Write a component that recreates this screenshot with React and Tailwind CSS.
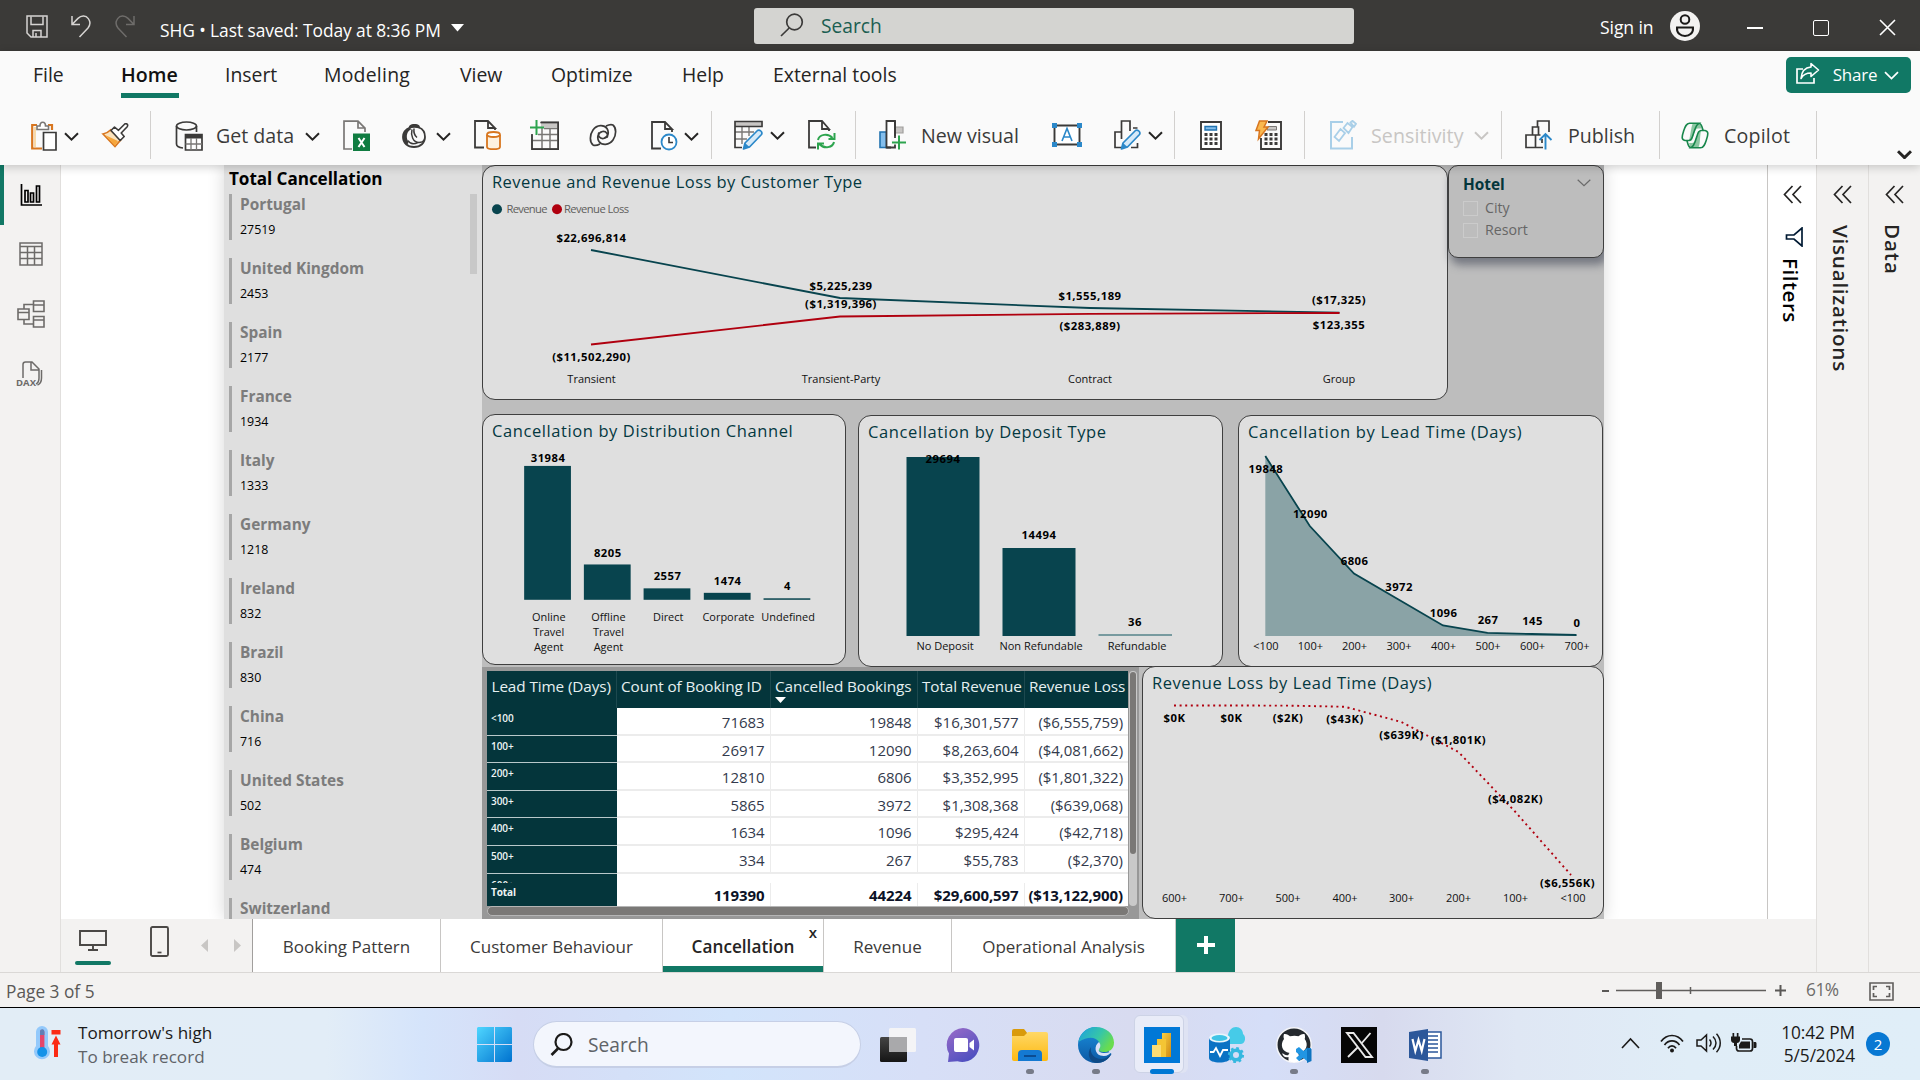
import React from "react";

const SANS = "font-['Open_Sans','Noto_Sans',sans-serif]";

/* ---------- shared bits ---------- */
function Svg({ w, h, className = "", children, ...rest }) {
  return (
    <svg width={w} height={h} viewBox={`0 0 ${w} ${h}`} fill="none" className={`block shrink-0 ${className}`} {...rest}>
      {children}
    </svg>
  );
}

function Chevron({ className = "", color = "#252423", width = 2 }) {
  return (
    <Svg w={15} h={9} className={className}>
      <path d="M1 1.2 7.5 7.6 14 1.2" stroke={color} strokeWidth={width} />
    </Svg>
  );
}

function Rule({ className }) {
  return <div className={`h-12 w-px shrink-0 bg-[#d2d0ce] ${className}`} />;
}

/* ---------- title bar ---------- */
function TitleBar() {
  return (
    <header className="flex h-[51px] shrink-0 items-center bg-[#3b3a38] text-white">
      <Svg w={22} h={23} className="ml-[26px] mt-0.5">
        <path d="M1 1h20v21H5l-4-4z" stroke="#d6d4d2" strokeWidth="1.5" />
        <path d="M5 1.5v8h12v-8M7 22v-6.5h8V22M10 18v4" stroke="#d6d4d2" strokeWidth="1.5" />
      </Svg>
      <Svg w={20} h={23} className="ml-[23px] mt-0.5">
        <path d="M1 1v8.5h8M1.5 9 7 3.4C10.500 0 15 .6 17.300 3.600 19.800 7 19 10.500 17 13L8.500 22" stroke="#d6d4d2" strokeWidth="1.5" />
      </Svg>
      <Svg w={20} h={23} className="ml-6 mt-0.5">
        <path d="M19 1v8.500h-8M18.500 9 13 3.400C9.500 0 5 .6 2.700 3.600.2 7 1 10.500 3 13l8.500 9" stroke="#6e6c6a" strokeWidth="1.5" />
      </Svg>
      <div className="ml-[25px] mt-[9px] w-[281px] whitespace-nowrap text-[17.4px]/[24px] tracking-[-0.08px]">SHG • Last saved: Today at 8:36 PM</div>
      <Svg w={13} h={8} className="ml-[10px] mt-1">
        <path d="M0 0h13L6.500 7.500z" fill="#fff" />
      </Svg>
      <div className="ml-[290px] flex h-9 w-[600px] items-center rounded-[3px] bg-[#d4d4d1]">
        <Svg w={24} h={24} className="ml-[26px] -mt-0.5">
          <circle cx="14.500" cy="9" r="7.800" stroke="#3b3a39" strokeWidth="1.7" />
          <path d="M9.200 15 1 23" stroke="#3b3a39" strokeWidth="1.7" />
        </Svg>
        <span className="ml-[17px] mt-[2px] text-[19.2px] text-[#1b5e51]">Search</span>
      </div>
      <span className="ml-[246px] mt-[3px] w-[55px] whitespace-nowrap text-[17.6px] tracking-[-0.1px]">Sign in</span>
      <div className="ml-[15px] flex h-[30px] w-[30px] items-center justify-center rounded-full bg-[#f3f2f1]">
        <Svg w={20} h={24}>
          <circle cx="10" cy="5.500" r="4.300" stroke="#1b1a19" strokeWidth="2" />
          <path d="M2 13.500h16c.5 5.500-3.500 8.500-8 8.500s-8.500-3-8-8.500z" stroke="#1b1a19" strokeWidth="2" />
        </Svg>
      </div>
      <div className="ml-[47px] mt-1 h-[2px] w-4 bg-white" />
      <div className="ml-[50px] mt-1 h-4 w-4 rounded-[2px] border-[1.5px] border-white" />
      <Svg w={17} h={17} className="ml-[50px] mt-1">
        <path d="M1 1l15 15M16 1 1 16" stroke="#fff" strokeWidth="1.6" />
      </Svg>
    </header>
  );
}

/* ---------- ribbon tabs ---------- */
function RibbonTabs() {
  return (
    <nav className="flex h-[54px] items-start pt-[9px] text-[19.4px]/[30px] text-[#252423]">
      <span className="ml-[33px] w-[88px]">File</span>
      <div className="w-[104px]">
        <div className="w-[58px] whitespace-nowrap border-b-[5px] border-[#117865] pb-[3px] text-[19.6px] font-semibold text-[#111]">Home</div>
      </div>
      <span className="w-[99px]">Insert</span>
      <span className="w-[136px] tracking-[0.25px]">Modeling</span>
      <span className="w-[91px]">View</span>
      <span className="w-[131px]">Optimize</span>
      <span className="w-[91px]">Help</span>
      <span className="w-[1013px] whitespace-nowrap">External tools</span>
      <button className="-mt-[3px] flex h-9 w-[125px] items-center rounded-[5px] bg-[#117865] text-white">
        <Svg w={24} h={22} className="ml-[10px] -mt-1">
          <path d="M7 7H1v14h17v-5" stroke="#fff" strokeWidth="1.7" />
          <path d="M15 1.500 22.500 8 15 14.500V11c-5 0-8 1.800-10 5.500C5.500 10 9 5.500 15 5z" stroke="#fff" strokeWidth="1.6" strokeLinejoin="round" />
        </Svg>
        <span className="ml-3 w-[46px] text-[17px] tracking-[-0.2px]">Share</span>
        <Chevron color="#fff" width={1.7} className="ml-[6px]" />
      </button>
    </nav>
  );
}

/* ---------- ribbon icons ---------- */
const K = "#3b3a39";

const PasteIcon = () => (
  <Svg w={26} h={30}>
    <path d="M6 4H1.200v23.500H11M17 4h4v5" stroke="#d8761f" strokeWidth="2.200" />
    <path d="M3 6h2v20H3z" fill="#f8d9a8" />
    <path d="M6 8.500V5h3c0-5 5.500-5 5.500 0h3v3.500z" fill="#fff" stroke="#797775" strokeWidth="1.600" />
    <path d="M12.500 11.500H25V29H12.500z" fill="#fff" stroke={K} strokeWidth="1.700" />
  </Svg>
);
const BrushIcon = () => (
  <Svg w={28} h={25}>
    <path d="m2 11 12 12.500 6-7L9.500 7C7 9.500 5 10.500 2 11z" fill="#fbe3bd" stroke="#d8761f" strokeWidth="1.700" />
    <path d="m4 12 13 6-3 5z" fill="#f6a63c" />
    <path d="M10 7.500 13.500 4l4 3.300 6-6.100c2-1.500 4 .5 2.700 2.500l-6 6.300 3 3.500-4 4z" fill="#fff" stroke={K} strokeWidth="1.600" strokeLinejoin="round" />
  </Svg>
);
const GetDataIcon = () => (
  <Svg w={28} h={30}>
    <ellipse cx="11.500" cy="5" rx="10" ry="4" stroke={K} strokeWidth="1.600" />
    <path d="M1.500 5v18c0 2 2 3.500 6.500 4M21.500 5v6" stroke={K} strokeWidth="1.700" />
    <path d="M10.500 13.500H27V29H10.500z" fill="#fff" stroke={K} strokeWidth="1.700" />
    <path d="M10.500 14H27v3.500H10.500z" fill={K} />
    <path d="M10.500 23H27M16 17v12M21.500 17v12" stroke="#797775" strokeWidth="1.300" />
  </Svg>
);
const ExcelIcon = () => (
  <Svg w={27} h={31}>
    <path d="M9 29H1V1.200h14l7 7V12M15 1.500V8h7" stroke="#797775" strokeWidth="1.700" />
    <path d="M10 13.500h17V31H10z" fill="#107c41" />
    <path d="m15.500 18 6 9M21.500 18l-6 9" stroke="#fff" strokeWidth="2" />
  </Svg>
);
const OneLakeIcon = () => (
  <Svg w={24} h={25}>
    <path d="M7 5.500C6 3 8.500 1 12.500 1S19 3 17.500 5.500c-3-1-7-1-10.500 0z" fill={K} />
    <path d="M8 4.500C3 6.500 1 10 1 14c0 6 4.500 10 11 10s11-4 11-10c0-4-2-8-6-9.500" stroke={K} strokeWidth="1.800" />
    <path d="M8 5C2 7 .5 10 1 15c.3 2.500 1.500 4.500 3.500 6.500C7 21 6.500 19 5.500 17 4 13 5 8 9.500 6z" fill={K} />
    <path d="M10 6.500c-1.500 6 1 13 7 13 2.500 0 4.500-1 5.500-3M12 5.500c-.5 4 .5 7 3 9M6 17.500c2 3.500 6 4 10 2" stroke={K} strokeWidth="1.500" />
  </Svg>
);
const SqlIcon = () => (
  <Svg w={27} h={30}>
    <path d="M10 27.500H1V1h13l7 7v2M14 1v7h7z" stroke={K} strokeWidth="1.800" />
    <path d="M13 15v12c0 3 13 3 13 0V15" fill="#fdf1df" stroke="#d8761f" strokeWidth="1.800" />
    <ellipse cx="19.500" cy="14.500" rx="6.500" ry="2.500" fill="#fff" stroke="#d8761f" strokeWidth="1.800" />
  </Svg>
);
const EnterDataIcon = () => (
  <Svg w={29} h={31}>
    <path d="M11 2.500h17v5H11z" fill="#c8c6c4" />
    <path d="M10 2.500h18V29H2V15M2 20.500h26M12 8v21M20 8v21M14 8.500h14M8 14.500h20" stroke="#797775" strokeWidth="1.500" />
    <path d="M11 2.300h17.200V29.200H2V14" stroke={K} strokeWidth="1.700" />
    <path d="M6.500 0v15M0 7.500h14" stroke="#2da44e" strokeWidth="2" />
  </Svg>
);
const DataverseIcon = () => (
  <Svg w={28} h={24}>
    <path d="M24 2C27.500 5 27.500 12 24 17c-4 5.500-11 5.500-14 1.500-2.500-4-1-9 3.500-10 4-.5 6 3 4.500 6M4 22C.5 19 .5 12 4 7 8 1.500 15 1.500 18 5.500c2.500 4 1 9-3.500 10-4 .5-6-3-4.500-6M4 22c2 1 5 0 7-1M24 2c-2-1-5 0-7 1" stroke={K} strokeWidth="1.700" />
  </Svg>
);
const RecentIcon = () => (
  <Svg w={27} h={30}>
    <path d="M10 27.500H1V1h13l7 7v3M14 1v7h7z" stroke={K} strokeWidth="1.800" />
    <circle cx="18" cy="21" r="7.500" fill="#fff" stroke="#2b88c9" strokeWidth="1.800" />
    <path d="M18 16v5.500h4" stroke={K} strokeWidth="1.600" />
  </Svg>
);
const Pencil = ({ x, y }) => (
  <g transform={`translate(${x} ${y})`}>
    <path d="m1 20 1.500-6L15 1.500c2-1.500 5.500 1.500 4 4L7 18z" fill="#d5e9f8" stroke="#2b88c9" strokeWidth="1.700" strokeLinejoin="round" />
    <path d="m1 20 1.500-6L7 18z" fill="#2b88c9" />
  </g>
);
const TransformIcon = () => (
  <Svg w={30} h={30}>
    <path d="M1 2h26v4H1z" fill="#c8c6c4" />
    <path d="M8 6v18M15 6v10M1 12h19M1 19h12" stroke="#797775" strokeWidth="1.400" />
    <path d="M8 27.500H1V1.500h27v5H1" stroke={K} strokeWidth="1.700" />
    <Pencil x={8.500} y={9} />
  </Svg>
);
const RefreshIcon = () => (
  <Svg w={28} h={30}>
    <path d="M8 27.500H1V1h13l7 8v2M14 1v8h7z" stroke={K} strokeWidth="1.800" />
    <path d="M10 20c1-5.500 10-7.500 14.500-2M26.500 13v6h-6M26 22c-1 5.500-10 7.500-14.500 2M10 29.500v-6h6" stroke="#2da44e" strokeWidth="2" />
  </Svg>
);
const NewVisualIcon = () => (
  <Svg w={28} h={30}>
    <path d="M16 7h8v6h-8z" fill="#c8c6c4" stroke="#a19f9d" strokeWidth="1.200" />
    <path d="M1 12h6.500v15.500H1z" fill="#83beec" stroke="#2273b0" strokeWidth="1.600" />
    <path d="M7.500 1H16v26.500H7.500z" fill="#fff" stroke={K} strokeWidth="1.800" />
    <path d="M12 16h16v14H12z" fill="#fafafa" />
    <path d="M7.500 27.500H16v-3M16 1v17" stroke={K} strokeWidth="1.800" />
    <path d="M20 15.500v14M13 22.500h14" stroke="#2da44e" strokeWidth="2" />
  </Svg>
);
const TextBoxIcon = () => (
  <Svg w={30} h={24}>
    <path d="M2.500 2.500h25v19h-25z" fill="#fff" stroke={K} strokeWidth="1.900" />
    <path d="M0 0h5v5H0zM25 0h5v5h-5zM0 19h5v5H0zM25 19h5v5h-5z" fill="#2b88c9" />
    <path d="m10 18 5-12.500L20 18M11.500 14h7" stroke="#2b88c9" strokeWidth="1.600" />
  </Svg>
);
const MoreVisualIcon = () => (
  <Svg w={28} h={30}>
    <path d="M8 27.500H1V12h6.500M7.500 19V1H16v10M19 8h4.500M23.500 23v4.500H17" stroke={K} strokeWidth="1.700" />
    <Pencil x={6.500} y={9} />
  </Svg>
);
const CalcBody = ({ x }) => (
  <g>
    <path d={`M${x + 4} 12h3v3h-3zM${x + 9} 12h3v3H${x + 9}zM${x + 14} 12h3v3h-3zM${x + 4} 16.500h3v3h-3zM${x + 9} 16.500h3v3H${x + 9}zM${x + 14} 16.500h3v3h-3zM${x + 4} 21h3v3h-3zM${x + 9} 21h3v3H${x + 9}zM${x + 14} 21h3v3h-3z`} fill={K} />
  </g>
);
const CalcIcon = () => (
  <Svg w={22} h={29}>
    <path d="M1 1h20v27H1z" fill="#fff" stroke={K} strokeWidth="1.900" />
    <path d="M5 5.500h11.500v3.500H5z" fill="#83beec" stroke="#2273b0" strokeWidth="1.400" />
    <CalcBody x={0.5} />
  </Svg>
);
const QuickMeasureIcon = () => (
  <Svg w={27} h={30}>
    <path d="M13 2h13v27H6V18" stroke={K} strokeWidth="1.900" />
    <path d="M13 6.500h8.500V10H12z" fill="#c8c6c4" stroke="#797775" />
    <g transform="translate(0 1)"><CalcBody x={5.500} /></g>
    <path d="M4.500 1H12L9 7h4L3.500 19l1-8.500H1z" fill="#f9b84f" stroke="#d8761f" strokeWidth="1.500" />
  </Svg>
);
const SensitivityIcon = () => (
  <Svg w={27} h={30}>
    <path d="M13 2H1v26.500h21V17" stroke="#a9cfe8" strokeWidth="2" />
    <path d="m4.500 17 6-8 4.500 4-6 8zM13.500 8l4-5 5 4-4 6zM20.500 2.500l2-1.700 3.500 3-2 3z" stroke="#a9cfe8" strokeWidth="1.800" />
  </Svg>
);
const PublishIcon = () => (
  <Svg w={28} h={30}>
    <path d="M1 15h9.500v12.500H1zM7.500 15V7h6v8M12.500 7V1H24v11M10.500 15h5M10.500 27.500H18M17 19v4" stroke={K} strokeWidth="1.700" />
    <path d="M20.500 29.500V15M14.500 20l6-6 6 6" stroke="#2b88c9" strokeWidth="1.900" />
  </Svg>
);
const CopilotIcon = () => (
  <Svg w={28} h={27}>
    <path d="M12 1h6c2 0 2 2 3 5.500h-4c-2 0-3 2-4 5l-2 7H8c2-7 2-14 4-17.500zM17 26h-6c-2 0-2-2-3-5h3c2 0 3-2 4-5l2-7h3c-1.500 7-.5 14-3 17z" fill="#8cc7a2" />
    <path d="M18 1.200H8.500C5 1.200 4 5 2.500 9.500S0 18 4 18.500h4c2 0 3-2 4-5.500l2-6c.6-2 1.500-4 4-5.800zM10 25.800h9.500c3.500 0 4.500-3.800 6-8.300S28 9 24 8.500h-4c-2 0-3 2-4 5.500l-2 6c-.6 2-1.500 4-4 5.800zM18 1.200c2.500 0 3 3 4 7M10 25.800c-2.500 0-3-3-4-7" stroke="#17864b" strokeWidth="1.600" />
  </Svg>
);

function Ribbon() {
  return (
    <div className="flex h-[60px] items-center text-[19.6px] text-[#3b3a39]">
      <div className="ml-[31px] mt-0.5"><PasteIcon /></div>
      <Chevron className="ml-[7px] mt-0.5" />
      <div className="ml-[22px]"><BrushIcon /></div>
      <Rule className="ml-[21px]" />
      <div className="ml-6 mt-0.5"><GetDataIcon /></div>
      <span className="ml-[13px] mt-[2px] w-[80px] whitespace-nowrap">Get data</span>
      <Chevron className="ml-[9px] mt-0.5" />
      <div className="ml-[23px]"><ExcelIcon /></div>
      <div className="ml-8"><OneLakeIcon /></div>
      <Chevron className="ml-[10px] mt-0.5" />
      <div className="ml-[23px]"><SqlIcon /></div>
      <div className="ml-[29px]"><EnterDataIcon /></div>
      <div className="ml-[30px]"><DataverseIcon /></div>
      <div className="ml-[34px] mt-0.5"><RecentIcon /></div>
      <Chevron className="ml-[6px] mt-0.5" />
      <Rule className="ml-3" />
      <div className="ml-[22px]"><TransformIcon /></div>
      <Chevron className="ml-[6px]" />
      <div className="ml-[23px]"><RefreshIcon /></div>
      <Rule className="ml-[19px]" />
      <div className="ml-[23px]"><NewVisualIcon /></div>
      <span className="ml-[14px] mt-[2px] w-[99px] whitespace-nowrap">New visual</span>
      <div className="ml-8"><TextBoxIcon /></div>
      <div className="ml-8"><MoreVisualIcon /></div>
      <Chevron className="ml-[6px]" />
      <Rule className="ml-[11px]" />
      <div className="ml-[25px]"><CalcIcon /></div>
      <div className="ml-[33px]"><QuickMeasureIcon /></div>
      <Rule className="ml-[22px]" />
      <div className="ml-[25px]"><SensitivityIcon /></div>
      <span className="ml-[14px] mt-[2px] w-[94px] whitespace-nowrap tracking-[0.1px] text-[#c8c6c4]">Sensitivity</span>
      <Chevron className="ml-[9px]" color="#c8c6c4" />
      <Rule className="ml-3" />
      <div className="ml-[23px]"><PublishIcon /></div>
      <span className="ml-[15px] mt-[2px] w-[67px]">Publish</span>
      <Rule className="ml-[24px]" />
      <div className="ml-[21px]"><CopilotIcon /></div>
      <span className="ml-[15px] mt-[2px] w-[68px] tracking-[0.2px]">Copilot</span>
      <Rule className="ml-[24px]" />
      <Chevron className="ml-20 mt-[38px]" width={3} />
    </div>
  );
}

/* ---------- left view switcher ---------- */
function ViewRail() {
  return (
    <aside className="flex w-[61px] shrink-0 flex-col border-r border-[#e1dfdd] bg-[#f3f2f1]">
      <div className="flex h-[60px] items-center border-l-4 border-[#117865] pl-4">
        <Svg w={22} h={23}>
          <path d="M1.500 0v21H22M5 18V6.500h3V18zM10.500 18V9h3v9zM16.500 18V2h3v16z" stroke="#000" strokeWidth="1.700" />
        </Svg>
      </div>
      <div className="flex h-[58px] items-center pl-[19px]">
        <Svg w={24} h={24}>
          <path d="M1 1h22v22H1zM1 4.500h22M1 10.500h22M1 16.500h22M8.500 4.500V23M15.500 4.500V23" stroke="#6d6b69" strokeWidth="1.500" />
        </Svg>
      </div>
      <div className="flex h-[62px] items-center pl-[17px]">
        <Svg w={28} h={28}>
          <path d="M1 9h11v10.500H1zM1 12.500h11M16.500 1H27v10.500H16.500zM16.500 5H27M16.500 16.500H27V27H16.500zM16.500 20H27M7 9V4.500h9.500M7 19.500V24h9.500" stroke="#6d6b69" strokeWidth="1.600" />
        </Svg>
      </div>
      <div className="flex h-[58px] items-center pl-[15px]">
        <Svg w={28} h={28}>
          <path d="M8 18V4.500C8 3 9 2 10.500 2H17l7 7v9c0 3-1 5-3 6M16 2v8h8M26.500 10v8c0 4-1.500 6-4 7" stroke="#6d6b69" strokeWidth="1.500" />
          <text x="1" y="25.500" fontSize="9.500" fontWeight="700" fill="#6d6b69" textLength="20">DAX</text>
        </Svg>
      </div>
    </aside>
  );
}

/* ---------- report visuals ---------- */
const countries = [
  ["Portugal", 27519], ["United Kingdom", 2453], ["Spain", 2177], ["France", 1934], ["Italy", 1333], ["Germany", 1218],
  ["Ireland", 832], ["Brazil", 830], ["China", 716], ["United States", 502], ["Belgium", 474], ["Switzerland", null],
];

function CountryList() {
  return (
    <section className="flex w-[258px] shrink-0 flex-col overflow-hidden bg-[#dfdfdf] pl-[5px]">
      <h2 className="h-[29px] shrink-0 pt-[1px] text-[17.1px]/[25px] font-bold tracking-[-0.05px] text-black">Total Cancellation</h2>
      <div className="flex">
        <div className="flex-1">
          {countries.map(([name, n]) => (
            <div key={name} className="h-16">
              <div className="h-[46px] border-l-[3px] border-[#a6a6a6] pl-[8px]">
                <div className="text-[15.4px]/[22px] font-bold text-[#7c7c7c]">{name}</div>
                {n !== null && <div className="pt-[4px] text-[12.400px]/[20px] text-black">{n}</div>}
              </div>
            </div>
          ))}
        </div>
        <div className="mr-[5px] h-20 w-[7px] bg-[#c8c8c8]" />
      </div>
    </section>
  );
}

const TEAL = "#08444e";
const RED = "#b0000f";

function Card({ title, className, tracking, children }) {
  return (
    <section className={`flex flex-col overflow-hidden rounded-[13px] border border-[#3f3f3f] bg-[#dfdfdf] ${className}`}>
      <h3 className={`ml-[9px] h-[34px] shrink-0 whitespace-nowrap text-[16.5px]/[32px] text-[#04383f] ${tracking}`}>{title}</h3>
      {children}
    </section>
  );
}

/* Labels are positioned by the middle of their line of text. */
function Val({ x, y, children }) {
  return <text x={x} y={y + 4.2} textAnchor="middle" fontSize="11.300" fontWeight="700" letterSpacing="0.5" fill="#000">{children}</text>;
}
function Cat({ x, y, children }) {
  return <text x={x} y={y + 4} textAnchor="middle" fontSize="11" fill="#111">{children}</text>;
}

function RevenueByCustomer() {
  return (
    <Card title="Revenue and Revenue Loss by Customer Type" tracking="tracking-[0.43px]" className="w-[966px]">
      <svg viewBox="483 200 964 199" width="964" height="199" className="block">
        <circle cx="497" cy="209.300" r="5" fill={TEAL} />
        <text x="506.500" y="213" fontSize="11.200" textLength="41" fill="#605e5c">Revenue</text>
        <circle cx="557" cy="209.300" r="5" fill={RED} />
        <text x="564" y="213" fontSize="11.200" textLength="65" fill="#605e5c">Revenue Loss</text>
        <polyline points="591,250 840,298 1090,308 1339.5,312.7" fill="none" stroke={TEAL} strokeWidth="1.800" />
        <polyline points="591,344.5 840,316.5 1090,313.8 1339.5,313" fill="none" stroke={RED} strokeWidth="1.800" />
        <Val x={591.5} y={238}>$22,696,814</Val>
        <Val x={841} y={286}>$5,225,239</Val>
        <Val x={841} y={304}>($1,319,396)</Val>
        <Val x={1090} y={296}>$1,555,189</Val>
        <Val x={1090} y={326}>($283,889)</Val>
        <Val x={1339} y={300}>($17,325)</Val>
        <Val x={1339} y={325}>$123,355</Val>
        <Val x={591.5} y={357}>($11,502,290)</Val>
        <Cat x={591.5} y={379}>Transient</Cat>
        <Cat x={841} y={379}>Transient-Party</Cat>
        <Cat x={1090} y={379}>Contract</Cat>
        <Cat x={1339} y={379}>Group</Cat>
      </svg>
    </Card>
  );
}

const channels = [
  { x: 523.5, top: 466, n: 31984, ly: 458, cat: ["Online", "Travel", "Agent"] },
  { x: 583.5, top: 565, n: 8205, ly: 553.5, cat: ["Offline", "Travel", "Agent"] },
  { x: 643.5, top: 589, n: 2557, ly: 576.5, cat: ["Direct"] },
  { x: 704, top: 593.5, n: 1474, ly: 581.5, cat: ["Corporate"] },
  { x: 764, top: 599, n: 4, ly: 586.5, cat: ["Undefined"] },
];

function ByChannel() {
  return (
    <Card title="Cancellation by Distribution Channel" tracking="tracking-[0.59px]" className="-mt-px mb-[2px] w-[364px]">
      <svg viewBox="483 449 362 216" width="362" height="216" className="block">
        {channels.map((c) => (
          <g key={c.n}>
            <rect x={c.x} y={c.top} width="47" height={600.5 - c.top} fill={TEAL} />
            <Val x={c.x + 24} y={c.ly}>{c.n}</Val>
            {c.cat.map((line, i) => (
              <Cat key={line} x={c.x + 24.700} y={618 + i * 15}>{line}</Cat>
            ))}
          </g>
        ))}
      </svg>
    </Card>
  );
}

function ByDeposit() {
  return (
    <Card title="Cancellation by Deposit Type" tracking="tracking-[0.61px]" className="ml-3 w-[365px]">
      <svg viewBox="859 450 363 216" width="363" height="216" className="block">
        <rect x="906.500" y="457" width="73" height="179" fill={TEAL} />
        <rect x="1002.500" y="548" width="73" height="88" fill={TEAL} />
        <rect x="1098.500" y="634" width="73.500" height="2" fill="#779a9f" />
        <Val x={943} y={459}>29694</Val>
        <Val x={1039} y={535}>14494</Val>
        <Val x={1135} y={622}>36</Val>
        <Cat x={945} y={646}>No Deposit</Cat>
        <Cat x={1041} y={646}>Non Refundable</Cat>
        <Cat x={1137} y={646}>Refundable</Cat>
      </svg>
    </Card>
  );
}

const lead = [
  [1265.3, 456, 19848, 469, "<100"], [1309.8, 526, 12090, 514, "100+"], [1354, 573.5, 6806, 561, "200+"], [1398.5, 599.5, 3972, 587, "300+"],
  [1443, 625.5, 1096, 613, "400+"], [1487.5, 632.8, 267, 620, "500+"], [1532, 634, 145, 621, "600+"], [1576.5, 635, 0, 623, "700+"],
];
const leadLine = lead.map(([x, y]) => `${x},${y}`).join(" ");

function ByLeadTime() {
  return (
    <Card title="Cancellation by Lead Time (Days)" tracking="tracking-[0.7px]" className="ml-[15px] w-[365px]">
      <svg viewBox="1239 450 363 216" width="363" height="216" className="block">
        <polygon points={`${leadLine} 1576.5,636 1265.3,636`} fill="#8aa3a6" />
        <polyline points={leadLine} fill="none" stroke={TEAL} strokeWidth="1.800" />
        {lead.map(([x, , n, ly, cat]) => (
          <g key={cat}>
            <Val x={x + 0.6} y={ly}>{n}</Val>
            <Cat x={x + 0.6} y={646}>{cat}</Cat>
          </g>
        ))}
      </svg>
    </Card>
  );
}

const loss = [
  [1174.5, "$0K", 1174.5, 718, "600+"], [1231.5, "$0K", 1231.5, 718, "700+"], [1288, "($2K)", 1288, 718, "500+"], [1345, "($43K)", 1345, 719, "400+"],
  [1401.5, "($639K)", 1401.5, 735, "300+"], [1458.5, "($1,801K)", 1458.5, 740, "200+"], [1515.5, "($4,082K)", 1515.5, 799, "100+"], [1573, "($6,556K)", 1567.5, 883, "<100"],
];

function LossByLead() {
  return (
    <Card title="Revenue Loss by Lead Time (Days)" tracking="tracking-[0.55px]" className="-mt-px ml-[3px] w-[462px]">
      <svg viewBox="1143 701 460 217" width="460" height="217" className="block">
        <polyline points="1174,705.500 1288,705.600 1345,706.800 1401.500,722 1458.500,752 1515,811.500 1571,875" fill="none" stroke={RED} strokeWidth="1.900" strokeDasharray="2 3.600" />
        {loss.map(([x, label, lx, ly, cat]) => (
          <g key={cat}>
            <Val x={lx} y={ly}>{label}</Val>
            <Cat x={x} y={898}>{cat}</Cat>
          </g>
        ))}
      </svg>
    </Card>
  );
}

function HotelSlicer() {
  return (
    <section className="h-[93px] w-[156px] rounded-[10px] border border-[#3f3f3f] bg-[#bdbdbd] pl-[14px] shadow-[3px_6px_9px_1px_rgba(70,75,90,0.6)]">
      <div className="flex h-[31px] items-center justify-between pt-[6px]">
        <span className="text-[15.400px] font-bold text-[#03363b]">Hotel</span>
        <Svg w={14} h={8} className="mr-[12px] -mt-1"><path d="M.7.7 7 6.700 13.300.7" stroke="#6a6a6a" strokeWidth="1.200" /></Svg>
      </div>
      {["City", "Resort"].map((o) => (
        <div key={o} className="flex h-[22px] items-center text-[14.200px] text-[#666]">
          <span className="mr-[7px] h-[15px] w-[15px] border border-[#cbcbcb]" />
          {o}
        </div>
      ))}
    </section>
  );
}

const rows = [
  ["<100", "71683", "19848", "$16,301,577", "($6,555,759)"],
  ["100+", "26917", "12090", "$8,263,604", "($4,081,662)"],
  ["200+", "12810", "6806", "$3,352,995", "($1,801,322)"],
  ["300+", "5865", "3972", "$1,308,368", "($639,068)"],
  ["400+", "1634", "1096", "$295,424", "($42,718)"],
  ["500+", "334", "267", "$55,783", "($2,370)"],
];
const COLS = "grid grid-cols-[129.5px_154px_147px_107px_103.5px]";

function LeadTable() {
  return (
    <section className="flex w-[657px] flex-col bg-[#989898] pl-[5px] pt-1">
      <div className="flex">
        <div className="h-[235px] w-[641px] overflow-hidden bg-white">
          <div className={`${COLS} h-[37px] bg-[#04353b] text-[15.300px]/[30px] tracking-[-0.1px] text-[#e6f0f1]`}>
            {["Lead Time (Days)", "Count of Booking ID", "Cancelled Bookings", "Total Revenue", "Revenue Loss"].map((h, i) => (
              <div key={h} className="whitespace-nowrap border-r border-[#1d494f] pl-[4.5px] last:border-r-0">
                {h}
                {i === 2 && <Svg w={11} h={6} className="-mt-[4px]"><path d="M0 0h11L5.500 6z" fill="#fff" /></Svg>}
              </div>
            ))}
          </div>
          {rows.map((r) => (
            <div key={r[0]} className={`${COLS} h-[27.600px] grid-rows-[27.6px] text-[15px]/[28.5px] tracking-[-0.05px] text-[#333a4c]`}>
              <div className="border-b border-[#b9c8ca] bg-[#04353b] pl-[4px] text-[10px]/[20px] font-semibold text-[#eef4f4]">{r[0]}</div>
              {r.slice(1).map((c, i) => (
                <div key={i} className="whitespace-nowrap border-b-2 border-r border-[#ececec] pr-[5px] text-right last:border-r-0">{c}</div>
              ))}
            </div>
          ))}
          <div className={`${COLS} h-[9px] grid-rows-[9px] overflow-hidden`}>
            <div className="bg-[#04353b] pl-[4px] pt-[1px] text-[10px]/[20px] font-semibold text-[#eef4f4]">600+</div>
          </div>
          <div className={`${COLS} h-6 grid-rows-[24px] text-[15px]/[24px] font-bold tracking-[-0.1px] text-[#0c1226]`}>
            <div className="bg-[#04353b] pl-[4px] text-[10px]/[19px] text-[#eef4f4]">Total</div>
            {["119390", "44224", "$29,600,597", "($13,122,900)"].map((c) => (
              <div key={c} className="flex justify-end whitespace-nowrap border-r border-[#ececec] pr-[5px] last:border-r-0">{c}</div>
            ))}
          </div>
        </div>
        <div className="ml-px w-2 rounded-full bg-[#c9c9c9]">
          <div className="mx-px mt-px h-[182px] rounded-full bg-[#7a7876]" />
        </div>
      </div>
      <div className="h-[10px] w-[642px] rounded-full border border-[#b5b5b5] bg-[#7a7876]" />
    </section>
  );
}

function ReportPage() {
  return (
    <div className="flex w-[1380px] shrink-0 overflow-hidden bg-[#bdbdbd] shadow-[0_0_16px_rgba(0,0,0,0.16)]">
      <CountryList />
      <div className="flex w-[1122px] flex-col">
        <div className="flex h-[235px]">
          <RevenueByCustomer />
          <HotelSlicer />
        </div>
        <div className="mt-[15px] flex h-[252px]">
          <ByChannel />
          <ByDeposit />
          <ByLeadTime />
        </div>
        <div className="flex h-[252px]">
          <LeadTable />
          <LossByLead />
        </div>
      </div>
    </div>
  );
}

/* ---------- right panes ---------- */
function Collapse() {
  return (
    <Svg w={19} h={19}>
      <path d="M9.500 1 1.500 9.500l8 8.500M18 1 10 9.500l8 8.500" stroke="#252423" strokeWidth="1.700" />
    </Svg>
  );
}

function SidePanes() {
  return (
    <div className={`flex shrink-0 ${SANS} text-[20.6px]/[24px] font-semibold text-[#252423]`}>
      <div className="flex w-[49px] flex-col">
        <div className="flex h-[754px] flex-col items-start border-l border-[#c8c6c4] bg-white pl-[15px] pt-5">
          <Collapse />
          <Svg w={19} h={20} className="ml-[2px] mt-[23px]">
            <path d="M17 1v18L9 12H1.500V8H9z" stroke="#001a33" strokeWidth="1.700" />
          </Svg>
          <span className="-ml-[4px] mt-[11px] tracking-[0.5px] text-[#000] [writing-mode:vertical-rl]">Filters</span>
        </div>
        <div className="flex-1 bg-[#f3f2f1]" />
      </div>
      <div className="flex w-[52px] flex-col items-start border-l border-[#e1dfdd] bg-[#f3f2f1] pl-4 pt-5">
        <Collapse />
        <span className="-ml-[4px] mt-[21px] tracking-[0.75px] [writing-mode:vertical-rl]">Visualizations</span>
      </div>
      <div className="flex w-[52px] flex-col items-start border-l border-[#e1dfdd] bg-[#f3f2f1] pl-4 pt-5">
        <Collapse />
        <span className="-ml-[4px] mt-[20px] tracking-[0.9px] [writing-mode:vertical-rl]">Data</span>
      </div>
    </div>
  );
}

/* ---------- page tabs ---------- */
function PageTabs() {
  const tab = "flex h-full items-center justify-center border-r border-[#c8c6c4] bg-white pt-[2px]";
  return (
    <div className="flex h-[53px] items-center bg-[#f3f2f1] text-[17px] text-[#3b3a39]">
      <div className="ml-[14px] flex h-full w-9 flex-col items-center pt-[11px]">
        <Svg w={28} h={21}>
          <path d="M1 1h26v14H1zM14 15v5M9 20h10" stroke="#4a4846" strokeWidth="1.900" />
        </Svg>
        <div className="mt-[10px] h-1 w-9 rounded-full bg-[#117865]" />
      </div>
      <Svg w={19} h={31} className="ml-[39px] -mt-[9px]">
        <rect x="1" y="1" width="17" height="29" rx="1.500" stroke="#4a4846" strokeWidth="1.900" />
        <path d="M7.500 26.500h4" stroke="#4a4846" strokeWidth="1.700" />
      </Svg>
      <Svg w={7} h={13} className="ml-8"><path d="M7 0v13L0 6.500z" fill="#c8c6c4" /></Svg>
      <Svg w={7} h={13} className="ml-[26px]"><path d="M0 0v13l7-6.500z" fill="#c8c6c4" /></Svg>
      <div className={`${tab} ml-[11px] w-[189px] border-l border-l-[#a19f9d]`}>Booking Pattern</div>
      <div className={`${tab} w-[222px]`}>Customer Behaviour</div>
      <div className={`${tab} relative w-[161px] font-semibold text-[#252423]`}>
        <span className="text-[17.2px]">Cancellation</span>
        <span className="absolute right-[6px] top-[2px] text-[15px]">x</span>
        <div className="absolute bottom-0 left-0 right-0 h-[6px] bg-[#117865]" />
      </div>
      <div className={`${tab} w-[128px]`}>Revenue</div>
      <div className={`${tab} w-[224px]`}>Operational Analysis</div>
      <div className="flex h-full w-[59px] items-center justify-center bg-[#117865]">
        <Svg w={18} h={18} className="-mt-px"><path d="M9 0v18M0 9h18" stroke="#fff" strokeWidth="4" /></Svg>
      </div>
    </div>
  );
}

function StatusBar() {
  return (
    <footer className="flex h-9 shrink-0 items-center border-b border-t border-b-black border-t-[#dad8d6] bg-[#f3f2f1] text-[17.300px] text-[#5a5856]">
      <span className="ml-[6px] mt-1 w-[1594px]">Page 3 of 5</span>
      <div className="ml-[2px] mt-[2px] h-[2px] w-[7px] bg-[#5a5856]" />
      <Svg w={150} h={18} className="ml-[7px]">
        <path d="M0 9.500h150M74.500 6v7" stroke="#605e5c" strokeWidth="1.500" />
        <path d="M40 1h6v17h-6z" fill="#605e5c" />
      </Svg>
      <Svg w={11} h={11} className="ml-[9px]"><path d="M5.500 0v11M0 5.500h11" stroke="#5a5856" strokeWidth="2" /></Svg>
      <span className="ml-[20px] w-[35px] tracking-[-0.5px] text-[#6e6c6a]">61%</span>
      <Svg w={25} h={19} className="ml-7 mt-0.5">
        <path d="M1 1h23v17H1z" stroke="#605e5c" strokeWidth="1.600" />
        <path d="M4.500 8V4.500H8M17 4.500h3.500V8M20.500 11v3.500H17M8 14.500H4.500V11" stroke="#605e5c" strokeWidth="1.700" />
      </Svg>
    </footer>
  );
}

/* ---------- taskbar ---------- */
function TaskItem({ className = "", dot, children }) {
  return (
    <div className={`flex h-full w-9 shrink-0 flex-col items-center pt-[19px] ${className}`}>
      {children}
      {dot && <div className="mt-[6px] h-[5px] w-2 rounded-full bg-[#777b88]" />}
    </div>
  );
}

function Taskbar() {
  return (
    <footer className="flex h-[72px] shrink-0 items-center bg-[linear-gradient(90deg,#e2edf6_0%,#e2edf7_17%,#d5e4fb_22%,#d6dcf5_27%,#d2e4fb_38%,#d7dff7_48%,#d8dbf0_59%,#d5def8_66%,#d7daee_72%,#dfe7f4_79%,#e0edf7_88%,#e0eef8_100%)]">
      <Svg w={28} h={36} className="ml-[34px]">
        <path d="M2 6a6 6 0 0 1 12 0v14a8 8 0 1 1-12 0z" fill="#93c9fb" />
        <path d="M6 6a2.200 2.200 0 0 1 4.400 0v18H6z" fill="#e5476b" />
        <path d="M6 5.500a2.200 2.200 0 0 1 4.400 0V9H6z" fill="#5f7fb5" />
        <circle cx="8.200" cy="26" r="5" fill="#1492e8" />
        <path d="M17.500 4h9v4.500h-9zM22 9.500l4.500 9h-9zM20 18h4v13h-4z" fill="#fb2a14" />
      </Svg>
      <div className="ml-4 mt-[2px] w-[383px] text-[17.100px]/[24px]">
        <div className="text-[#1b1a19]">Tomorrow's high</div>
        <div className="text-[#5f6368]">To break record</div>
      </div>
      <Svg w={35} h={35} className="ml-4">
        <defs>
          <linearGradient id="win" x1="0" y1="0" x2="1" y2="1"><stop stopColor="#4fd6ff" /><stop offset="1" stopColor="#0072cf" /></linearGradient>
        </defs>
        <path d="M1 0h16v17H0V1zM18 0h16l1 1v16H18zM0 18h17v17H1l-1-1zM18 18h17v16l-1 1H18z" fill="url(#win)" />
      </Svg>
      <div className="ml-[21px] mt-px flex h-[47px] w-[328px] items-center rounded-full border border-b-2 border-[#c6cfe6] bg-[#f3f6fd]">
        <Svg w={23} h={23} className="ml-4">
          <circle cx="13.500" cy="9" r="8" stroke="#1b1a19" strokeWidth="2.200" />
          <path d="M8 15.500 1.500 22" stroke="#1b1a19" strokeWidth="2.600" />
        </Svg>
        <span className="ml-[15px] mt-[2px] text-[19.200px] text-[#5f6368]">Search</span>
      </div>
      <TaskItem className="ml-[19px]">
        <Svg w={36} h={36}>
          <defs>
            <linearGradient id="tv" x1="0" y1="0" x2="0" y2="1"><stop stopColor="#444" /><stop offset="1" stopColor="#151515" /></linearGradient>
          </defs>
          <rect y="10" width="27" height="25" rx="1.500" fill="url(#tv)" />
          <rect x="9" y="1" width="27" height="24" rx="1.500" fill="#f4f4f6" />
          <path d="M9 10h18v15H10.500L9 23.500z" fill="#a9a9ab" />
        </Svg>
      </TaskItem>
      <TaskItem className="ml-[29px]">
        <Svg w={34} h={36}>
          <defs>
            <linearGradient id="tm" x1="0" y1="0" x2=".6" y2="1"><stop stopColor="#9b6cc8" /><stop offset="1" stopColor="#4f50c0" /></linearGradient>
          </defs>
          <path d="M17 1a17 17 0 1 1-5.500 33.300L2 35l1-8.500A17 17 0 0 1 17 1z" fill="url(#tm)" />
          <rect x="8" y="11" width="14" height="14" rx="2" fill="#fff" />
          <path d="M23.500 16 28 12.500v11L23.500 20z" fill="#fff" />
        </Svg>
      </TaskItem>
      <TaskItem className="ml-[31px]" dot>
        <Svg w={36} h={36}>
          <defs>
            <linearGradient id="fd" x1="0" y1="0" x2="0" y2="1"><stop stopColor="#ffd866" /><stop offset="1" stopColor="#fdb912" /></linearGradient>
          </defs>
          <path d="M0 4a2 2 0 0 1 2-2h10l4 5-4 4H0z" fill="#d99a0b" />
          <path d="M0 9h12l4-4h18a2 2 0 0 1 2 2v25a2 2 0 0 1-2 2H2a2 2 0 0 1-2-2z" fill="url(#fd)" />
          <path d="M6 34V27a4 4 0 0 1 4-4h16a4 4 0 0 1 4 4v7z" fill="#1479d2" />
          <path d="M12 29h12" stroke="#0b4c92" strokeWidth="2" />
        </Svg>
      </TaskItem>
      <TaskItem className="ml-[30px]" dot>
        <Svg w={36} h={36}>
          <defs>
            <linearGradient id="eg" x1="0" y1="0" x2="1" y2=".5"><stop stopColor="#1c9fe0" /><stop offset=".6" stopColor="#36c6a8" /><stop offset="1" stopColor="#69dc4f" /></linearGradient>
            <linearGradient id="eb" x1="0" y1="0" x2="0" y2="1"><stop stopColor="#1a8fdd" /><stop offset="1" stopColor="#0c59a4" /></linearGradient>
          </defs>
          <path d="M18 0C8 0 0 8 0 18s8 18 18 18c7 0 12-3 15.500-9L26 20V8z" fill="url(#eb)" />
          <path d="M.5 15C2 6 9 0 18 0c10 0 18 7 18 15.500 0 7-5 9.500-9.500 9.500-5 0-6.500-1.500-5.500-3 1.500-2 1.500-4.500 0-7C18 10.500 11 8.500.5 15z" fill="url(#eg)" />
          <path d="M13 20c-1.500 7 4 12.500 11 12 4-.3 7-2.500 9.500-5.500C31 32 25.500 36 19 36 11 35.500 8.500 26 13 20z" fill="#0e4a86" />
          <path d="M21 15c2.500 3.500 1 5.500 0 7.500-1 2 2 3.500 5.500 3.500 4 0 6-1 8-2.500-2.500 4.500-7 6.500-12 5C17 27 15.500 19 21 15z" fill="#d9e1f6" />
        </Svg>
      </TaskItem>
      <div className="ml-5 mr-[5px] h-[58px] w-[50px] shrink-0 rounded-[6px] border border-[#cdd3e6] bg-[#e9ecf8] pl-[9px] shadow-[4px_0_0_0_#dfe3f3]">
        <div className="flex w-9 flex-col items-center pt-[11px]">
          <Svg w={36} h={36}>
            <defs>
              <linearGradient id="pb" x1="0" y1="0" x2="1" y2="1"><stop stopColor="#f8cf45" /><stop offset="1" stopColor="#d08a10" /></linearGradient>
            </defs>
            <path d="M0 0h36v36H0z" fill="#0078d7" />
            <path d="M18 6h9v24h-9z" fill="url(#pb)" />
            <path d="M13 12h9v18h-9z" fill="#f4c534" />
            <path d="M8 18h9v12H8z" fill="#fbdc74" />
          </Svg>
          <div className="mt-[6px] h-[5px] w-6 rounded-full bg-[#0078d4]" />
        </div>
      </div>
      <TaskItem className="ml-5">
        <Svg w={36} h={36}>
          <path d="M18 17c-4-2-4-8 1-9 1-5 4-8 8-8s7 3 7 7c3 2 3 9-2 10z" fill="#46cbe8" />
          <path d="M0 11v20c0 6 21 6 21 0V11z" fill="#0a72c4" />
          <ellipse cx="10.500" cy="11" rx="10.500" ry="4.500" fill="#e9f5fb" />
          <ellipse cx="10.500" cy="11" rx="8" ry="3" fill="#3fc4e6" />
          <path d="M1 25h3.500l2.500-4 4 8 3-6h5" stroke="#fff" strokeWidth="1.800" />
          <circle cx="27" cy="28" r="4.800" stroke="#35b8e0" strokeWidth="3.600" />
          <circle cx="27" cy="28" r="7" stroke="#35b8e0" strokeWidth="2.200" strokeDasharray="2.750 2.750" />
        </Svg>
      </TaskItem>
      <TaskItem className="ml-[31px]" dot>
        <Svg w={36} h={36}>
          <circle cx="18" cy="18" r="17.200" fill="#24292e" stroke="#f4f5f9" strokeWidth="1.500" />
          <path d="M8 7c2.500-.5 4.500 1 6 2.200 3-.7 6-.7 8.500 0C24 8 26 6.500 28.500 7c.8 2 .6 4 .2 5 4 5 2.300 13-6.700 14 1.500 2 1 5 1 8.500-3 1-7 1-10.500 0V30c-4 1-5-1-6.500-3.500 2-.5 3 2.500 6.500 1.500 0-1 .5-1.800 1.200-2C5.500 25 4 17 8 12c-.6-1.500-.6-3.500 0-5z" fill="#fff" />
          <path d="m20 22 3-2 11 10v4h-3L20 25zM20 31l11-10h4v4l-12 9z" fill="#2196e3" />
          <path d="M31 20.500 35.500 22v12L31 36z" fill="#0f74c0" />
        </Svg>
      </TaskItem>
      <TaskItem className="ml-[29px]">
        <Svg w={36} h={36}>
          <path d="M0 0h36v36H0z" fill="#050505" />
          <path d="M6 6h6.500L31 30h-6.500zM29.500 6 20 17M16.500 20.500 7 30" stroke="#e8e8e8" strokeWidth="1.900" />
        </Svg>
      </TaskItem>
      <TaskItem className="ml-[30px]" dot>
        <Svg w={36} h={36}>
          <path d="M18 5h16v26H18z" fill="#fff" stroke="#2b579a" strokeWidth="1.500" />
          <path d="M20 9h11M20 13h11M20 17h11M20 21h11M20 25h11" stroke="#2b579a" strokeWidth="1.700" />
          <path d="M2 5 21 2v32L2 31z" fill="#2b579a" />
          <path d="m5.500 12 2.800 12L11.500 13l3.200 11 2.800-12" stroke="#fff" strokeWidth="2.200" />
        </Svg>
      </TaskItem>
      <Svg w={19} h={12} className="ml-[178px] -mt-[2px]"><path d="m1 11 8.500-9 8.500 9" stroke="#1b1a19" strokeWidth="1.600" /></Svg>
      <Svg w={24} h={19} className="ml-[20px] -mt-[2px]">
        <path d="M1 7.500C7-.5 17-.5 23 7.500M4.500 11c4-5.500 11-5.500 15 0M8 14.200c2-3 6-3 8 0" stroke="#1b1a19" strokeWidth="1.700" />
        <circle cx="12" cy="16.500" r="2" fill="#1b1a19" />
      </Svg>
      <Svg w={25} h={20} className="ml-3 -mt-[2px]">
        <path d="M1 7v6h4l5.500 5V2L5 7zM13.500 6.500c2 2 2 5 0 7M17 3.500c4 4 4 9 0 13M20.500.800c5 5.500 5 13 0 18.400" stroke="#1b1a19" strokeWidth="1.500" />
      </Svg>
      <Svg w={26} h={20} className="ml-[10px] -mt-[3px]">
        <path d="M11 6h8c1.500 0 2.500 1 2.500 2.500v7c0 1.500-1 2.500-2.500 2.500H8c-1.500 0-2.500-1-2.500-2.500V13" stroke="#1b1a19" strokeWidth="1.700" />
        <path d="M10 8.500h9v7H8V12zM22.500 9H24c1 0 1.500.5 1.500 1.500v3c0 1-.5 1.500-1.500 1.500h-1.500zM0 3.500h9V7c0 2-1.500 3-3 3v3H3v-3C1.500 10 0 9 0 7zM1.500 0h1.700v4H1.500zM5.800 0h1.700v4H5.800z" fill="#1b1a19" />
      </Svg>
      <div className="w-[98px] whitespace-nowrap text-right text-[17.300px]/[23px] tracking-[-0.1px] text-[#1b1a19]">
        <div>10:42 PM</div>
        <div>5/5/2024</div>
      </div>
      <div className="ml-[11px] flex h-6 w-6 items-center justify-center rounded-full bg-[#0878d3] text-[15px] text-white">2</div>
    </footer>
  );
}

export default function App() {
  return (
    <div className={`flex h-[1080px] w-[1920px] flex-col overflow-hidden bg-white ${SANS}`}>
      <TitleBar />
      <div className="z-10 h-[114px] shrink-0 bg-[#fafafa] shadow-[0_2px_9px_rgba(0,0,0,0.2)]">
        <RibbonTabs />
        <Ribbon />
      </div>
      <main className="flex h-[807px] shrink-0">
        <ViewRail />
        <div className="flex w-[1706px] shrink-0 flex-col">
          <div className="flex h-[754px] overflow-hidden bg-white pl-[163px]">
            <ReportPage />
          </div>
          <PageTabs />
        </div>
        <SidePanes />
      </main>
      <StatusBar />
      <Taskbar />
    </div>
  );
}
